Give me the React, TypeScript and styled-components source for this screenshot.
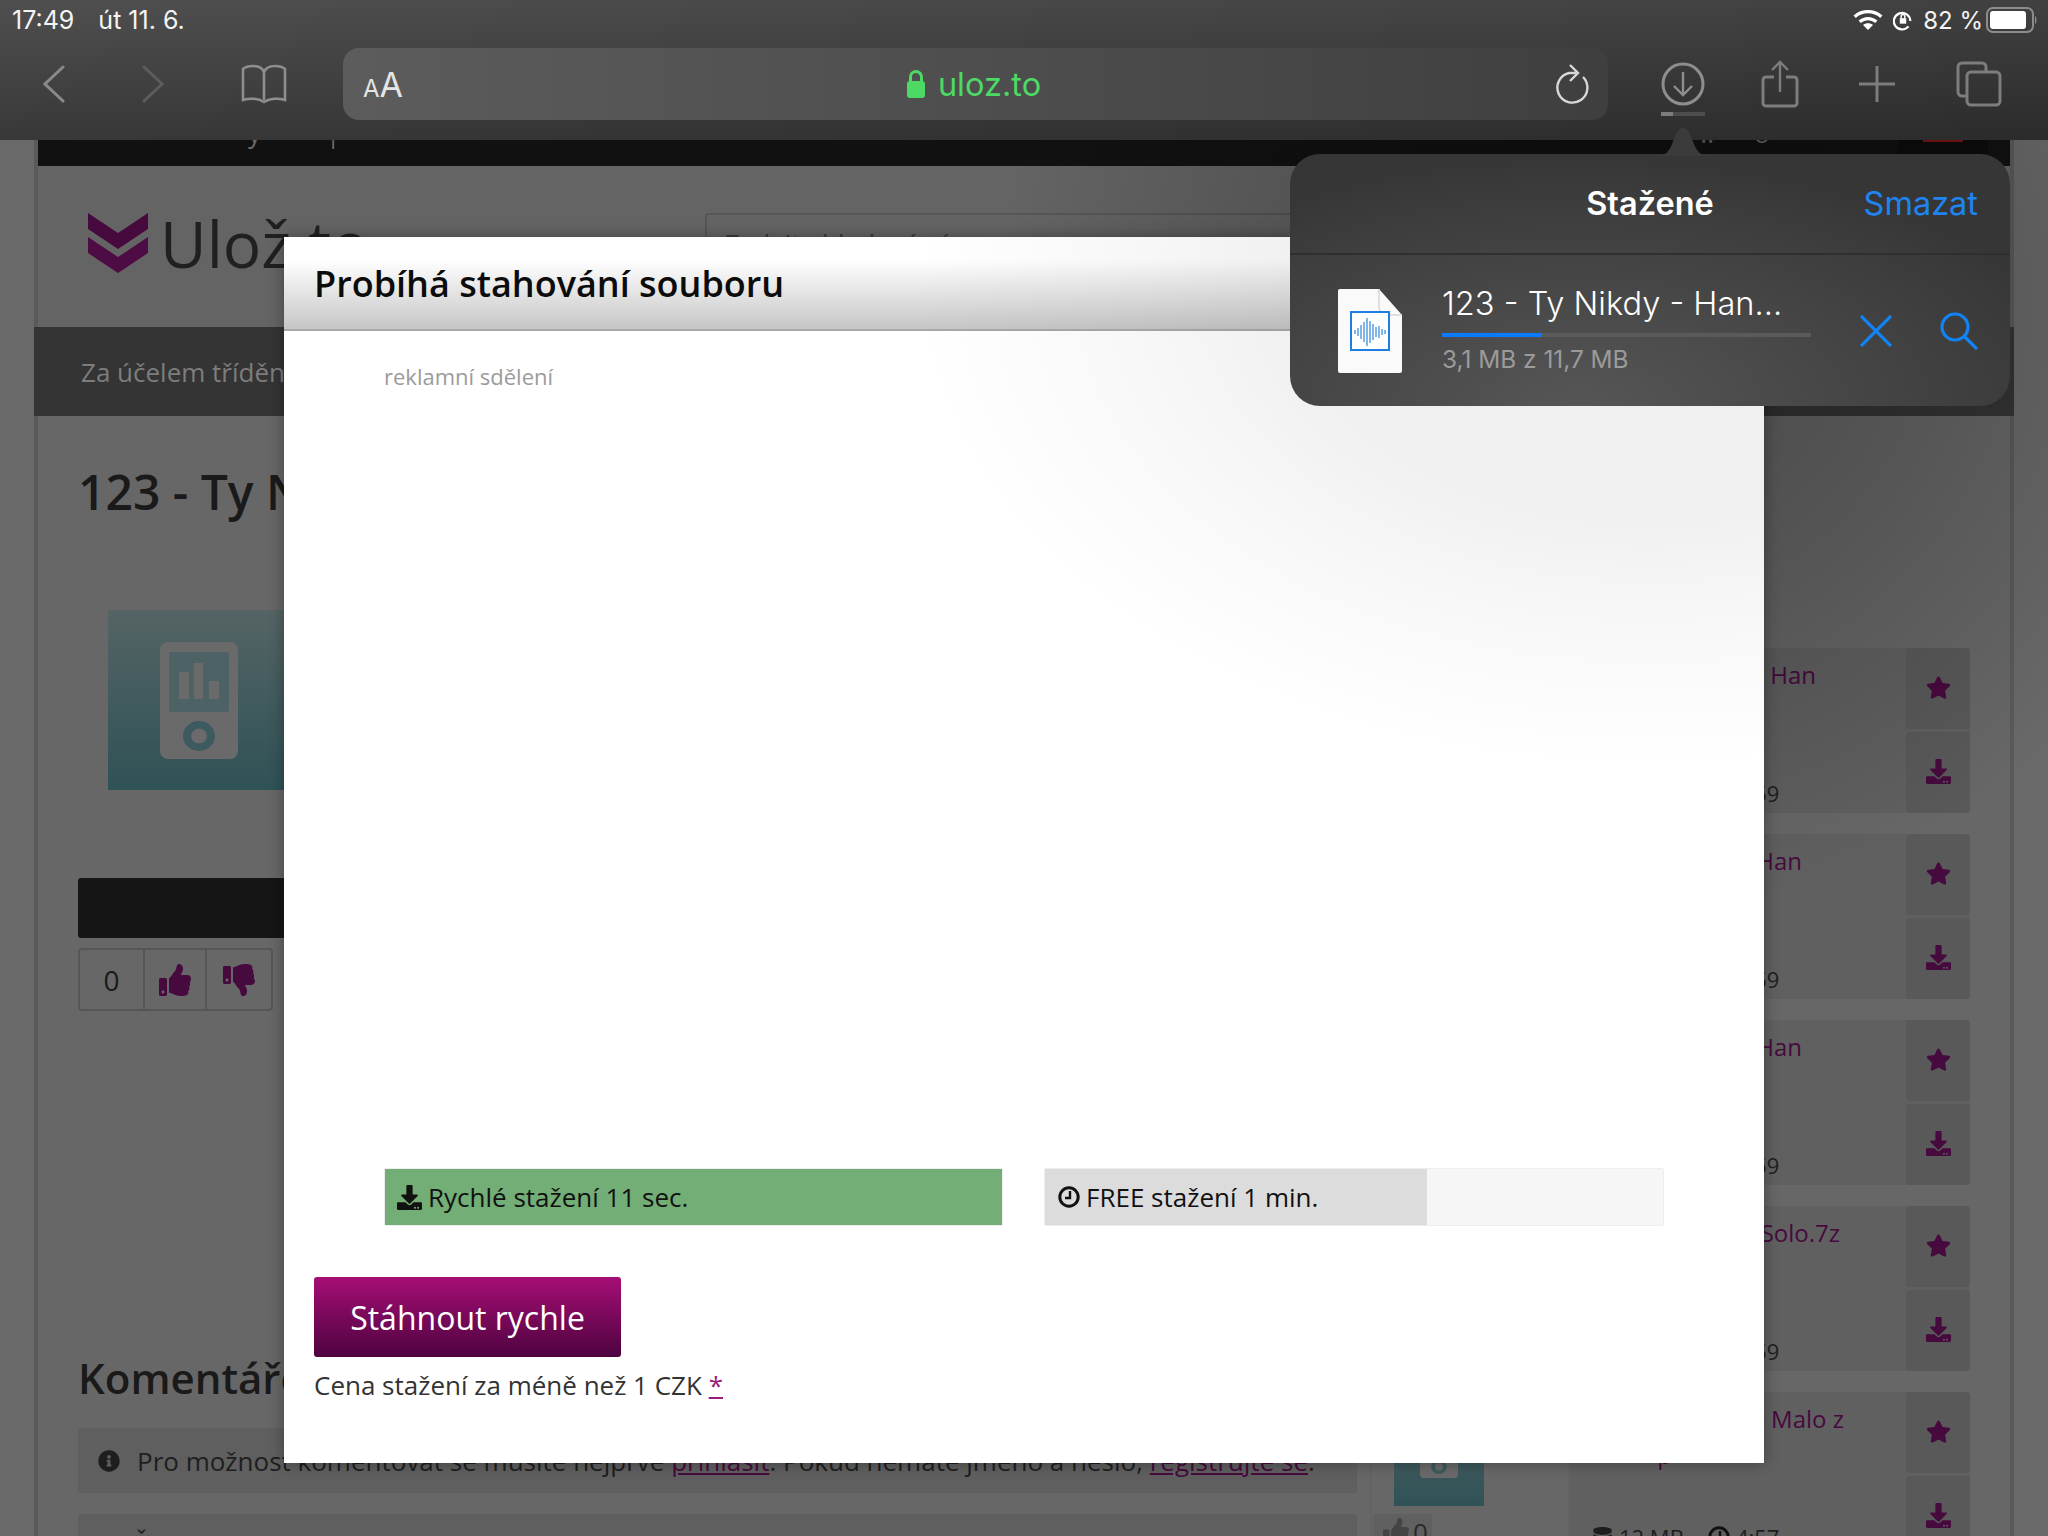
import React from 'react';
import styled, { createGlobalStyle } from 'styled-components';
import { FaDownload, FaStar, FaThumbsUp, FaThumbsDown, FaInfoCircle, FaDatabase } from 'react-icons/fa';

const GlobalStyle = createGlobalStyle`
  html, body { margin: 0; padding: 0; background: #666; }
  * { box-sizing: border-box; }
`;

const Screen = styled.div`
  position: relative;
  width: 2048px;
  height: 1536px;
  overflow: hidden;
  background: #696969;
  font-family: 'Open Sans', 'Liberation Sans', sans-serif;
  display: flex;
  flex-direction: column;
`;

/* ---------- safari chrome ---------- */
const Chrome = styled.header`
  position: relative;
  z-index: 4;
  flex: none;
  height: 140px;
  background: linear-gradient(to right, rgba(255, 255, 255, 0.04), rgba(0, 0, 0, 0.1)),
    linear-gradient(to bottom, #484848, #303030);
`;

const StatusBar = styled.div`
  height: 40px;
  display: flex;
  align-items: center;
  padding: 0 10px 0 12px;
  color: #f4f4f4;
  font: 400 25px Inter, 'Liberation Sans', sans-serif;
`;

const StatusDate = styled.span`
  margin-left: 24px;
  flex: 1;
`;

const StatusIcons = styled.div`
  display: flex;
  align-items: center;
  font-size: 24px;
`;

const BatteryLevel = styled.span`
  margin: 0 3px 0 10px;
`;

const RotationSlot = styled.span`
  display: flex;
  margin-left: 10px;
`;

const Toolbar = styled.div`
  display: flex;
  align-items: center;
  height: 88px;
`;

const NavGroup = styled.div`
  width: 343px;
  padding-left: 43px;
  display: flex;
  align-items: center;
  gap: 77px;
`;

const UrlBar = styled.div`
  position: relative;
  width: 1265px;
  height: 72px;
  border-radius: 16px;
  background: linear-gradient(to right, #5c5c5c, #4b4b4b 60%, #3f3f3f);
  display: flex;
  align-items: center;
  justify-content: space-between;
  padding: 0 18px 0 20px;
`;

const TextSize = styled.span`
  color: #e4e4e4;
  font: 400 34px Inter, 'Liberation Sans', sans-serif;
  small {
    font-size: 24px;
  }
`;

const Address = styled.div`
  margin-right: 12px;
  display: flex;
  align-items: center;
  gap: 12px;
  color: #4cd964;
  font: 400 32.5px Inter, 'Liberation Sans', sans-serif;
`;

const ActionGroup = styled.div`
  margin-left: 53px;
  display: flex;
  align-items: center;
`;

const ActionSlot = styled.div<{ $gap: number }>`
  display: flex;
  margin-left: ${(p) => p.$gap}px;
`;

const DownloadSlot = styled.div`
  position: relative;
  width: 44px;
  height: 44px;
`;

const MiniProgress = styled.div`
  position: absolute;
  left: 0;
  top: 50px;
  width: 44px;
  height: 4px;
  background: #4d4d4d;
  &::before {
    content: '';
    display: block;
    width: 12px;
    height: 4px;
    background: #7c7c7c;
  }
`;

const PopArrow = styled.svg`
  position: absolute;
  left: -7px;
  top: 66px;
  width: 58px;
  height: 28px;
  fill: #3b3b3b;
`;

/* ---------- dimmed page behind the dialog ---------- */
const Page = styled.div`
  position: relative;
  flex: 1;
  margin: 0 34px;
  border-left: 4px solid #5a5a5a;
  border-right: 4px solid #5a5a5a;
  background: #676767;
  &::after {
    content: '';
    position: absolute;
    inset: -140px -40px 0 -40px;
    background: radial-gradient(circle 620px at 1620px 300px, rgba(0, 0, 0, 0.32), rgba(0, 0, 0, 0.18) 50%, rgba(0, 0, 0, 0));
    pointer-events: none;
  }
`;

const BlackStrip = styled.div`
  height: 26px;
  background: #111;
  overflow: hidden;
  display: flex;
  color: #6a6a6a;
  font-size: 26px;
  line-height: 26px;
`;

const StripText = styled.span<{ $left: number }>`
  margin-top: -20px;
  margin-left: ${(p) => p.$left}px;
`;

const StripBadge = styled.span`
  margin-left: 128px;
  width: 90px;
  height: 16px;
  background: #0c0c0c;
  display: flex;
  justify-content: center;
  &::before {
    content: '';
    width: 40px;
    height: 2px;
    background: #7a1414;
  }
`;

const SiteHeader = styled.div`
  height: 161px;
  padding: 47px 0 0 50px;
  display: flex;
  background: #646464;
`;

const Logo = styled.div`
  width: 617px;
  display: flex;
  align-items: flex-start;
  gap: 12px;
  color: #202020;
  font-size: 64px;
  line-height: 62px;
`;

const SearchField = styled.div`
  width: 640px;
  height: 64px;
  border: 2px solid #565656;
  border-radius: 3px;
  padding: 10px 18px;
  color: #3a3a3a;
  font-size: 26px;
`;

const SiteNav = styled.div`
  height: 89px;
  margin: 0 -4px;
  padding-left: 47px;
  display: flex;
  align-items: center;
  background: #343434;
  color: #7d7d7d;
  font-size: 26px;
`;

const Columns = styled.div`
  display: flex;
  align-items: flex-start;
`;

const MainColumn = styled.div`
  width: 1279px;
  margin-left: 40px;
`;

const PageTitle = styled.h1`
  margin: 48px 0 0;
  height: 56px;
  color: #1a1a1a;
  font-size: 48px;
  line-height: 56px;
  font-weight: 600;
  white-space: nowrap;
`;

const Thumb = styled.div`
  width: 200px;
  height: 180px;
  margin: 90px 0 0 30px;
  display: flex;
  align-items: center;
  padding-left: 52px;
  background: linear-gradient(to bottom, #556464, #2f5257);
`;

const BlackBar = styled.div`
  height: 60px;
  margin-top: 88px;
  border-radius: 3px;
  background: #151515;
`;

const Rating = styled.div`
  margin-top: 10px;
  width: 195px;
  height: 63px;
  display: grid;
  grid-template-columns: 63px 62px 66px;
  border: 2px solid #565656;
  border-radius: 4px;
`;

const RatingCell = styled.div`
  display: flex;
  align-items: center;
  justify-content: center;
  color: #1a1a1a;
  font-size: 28px;
  & + & {
    border-left: 2px solid #565656;
  }
  svg {
    color: #470a3e;
    font-size: 32px;
  }
`;

const CommentsTitle = styled.h2`
  margin: 339px 0 0;
  height: 56px;
  color: #1a1a1a;
  font-size: 42px;
  line-height: 56px;
  font-weight: 600;
`;

const InfoBox = styled.div`
  margin-top: 22px;
  height: 65px;
  padding-left: 20px;
  display: flex;
  align-items: center;
  gap: 17px;
  border-radius: 3px;
  background: #5f5f5f;
  color: #1e1e1e;
  font-size: 26px;
  white-space: nowrap;
  svg {
    font-size: 22px;
  }
  a {
    color: #470a3e;
    text-decoration: underline;
  }
`;

const SortBox = styled.div`
  margin-top: 21px;
  height: 80px;
  padding: 12px 0 0 56px;
  border-radius: 3px;
  background: #5f5f5f;
  color: #1e1e1e;
  font-size: 26px;
`;

const SideColumn = styled.div`
  margin-left: 13px;
  width: 600px;
  padding-top: 232px;
  border-left: 2px solid #636363;
  display: flex;
  flex-direction: column;
  gap: 21px;
`;

const SideRow = styled.div`
  display: flex;
  height: 165px;
`;

const SideMedia = styled.div`
  width: 198px;
  flex: none;
  padding-left: 22px;
  border-right: 2px solid #636363;
`;

const SideThumb = styled.div`
  width: 90px;
  height: 114px;
  display: flex;
  align-items: center;
  justify-content: center;
  background: linear-gradient(to bottom, #556464, #2f5257);
`;

const SideLikes = styled.div`
  margin: 8px 0 0 -21px;
  width: 59px;
  height: 40px;
  padding: 4px 0 0 10px;
  display: flex;
  gap: 4px;
  border-radius: 3px;
  background: #606060;
  color: #2a2a2a;
  font-size: 26px;
  line-height: 28px;
  svg {
    color: #444;
  }
`;

const SideCard = styled.div`
  width: 400px;
  display: flex;
  border-radius: 3px;
  background: #606060;
`;

const SideText = styled.div`
  position: relative;
  flex: 1;
  padding-top: 9px;
`;

const SideTitle = styled.div<{ $inset: number }>`
  padding-right: ${(p) => p.$inset}px;
  height: 36px;
  text-align: right;
  white-space: nowrap;
  color: #470a3e;
  font-size: 24px;
  line-height: 36px;
`;

const SideMeta = styled.div`
  margin-top: 46px;
  padding-left: 22px;
  display: flex;
  align-items: center;
  gap: 6px;
  color: #1e1e1e;
  font-size: 22px;
  line-height: 36px;
  svg {
    font-size: 21px;
  }
`;

const MetaSpacer = styled.span`
  width: 12px;
`;

const SideButtons = styled.div`
  width: 64px;
  display: flex;
  flex-direction: column;
  gap: 3px;
`;

const SideButton = styled.div`
  flex: 1;
  display: flex;
  align-items: center;
  justify-content: center;
  padding-bottom: 2px;
  border-radius: 4px;
  background: #595959;
  color: #470a3e;
  font-size: 25px;
`;

/* ---------- dialog ---------- */
const Dialog = styled.section`
  position: absolute;
  z-index: 2;
  left: 284px;
  top: 237px;
  width: 1480px;
  height: 1226px;
  background: #fff;
  box-shadow: 0 0 14px rgba(0, 0, 0, 0.35);
  &::after {
    content: '';
    position: absolute;
    inset: 0;
    pointer-events: none;
    background: radial-gradient(
      ellipse 740px 490px at 1366px 43px,
      rgba(0, 0, 0, 0.058) 48%,
      rgba(0, 0, 0, 0.026) 72%,
      rgba(0, 0, 0, 0) 100%
    );
  }
`;

const DialogHeader = styled.div`
  height: 94px;
  padding-left: 30px;
  display: flex;
  align-items: center;
  border-bottom: 2px solid #a8a8a8;
  background: linear-gradient(to bottom, #fff 25%, #c6c6c6);
  color: #0c0c0c;
  font-size: 36px;
  font-weight: 600;
`;

const DialogBody = styled.div`
  padding: 0 30px;
`;

const AdLabel = styled.div`
  height: 32px;
  margin: 29px 0 0 70px;
  color: #9b9b9b;
  font-size: 22px;
  line-height: 32px;
`;

const Bars = styled.div`
  margin: 776px 70px 0;
  display: grid;
  grid-template-columns: 619px 620px;
  gap: 41px;
`;

const Bar = styled.div`
  height: 58px;
  border: 1px solid #eeeeee;
  background: #f6f6f6;
  border-radius: 2px;
`;

const BarFill = styled.div<{ $fast?: boolean }>`
  height: 100%;
  padding-left: ${(p) => (p.$fast ? 12 : 13)}px;
  display: flex;
  align-items: center;
  gap: 6px;
  background: ${(p) => (p.$fast ? '#73ae76' : '#dcdcdc')};
  color: #111;
  font-size: 26px;
  white-space: nowrap;
  svg {
    font-size: 25px;
  }
`;

const FastButton = styled.div`
  margin-top: 51px;
  width: 307px;
  height: 80px;
  display: flex;
  align-items: center;
  justify-content: center;
  border-radius: 3px;
  background: linear-gradient(to bottom, #a50e75, #4e0340);
  color: #fff;
  font-size: 32px;
`;

const PriceNote = styled.p`
  margin: 10px 0 0;
  color: #333;
  font-size: 26px;
  line-height: 36px;
  a {
    color: #9b1b78;
    text-decoration: underline;
  }
`;

/* ---------- downloads popover ---------- */
const Popover = styled.aside`
  position: absolute;
  z-index: 3;
  left: 1290px;
  top: 154px;
  width: 720px;
  height: 252px;
  border-radius: 30px;
  background: radial-gradient(ellipse 520px 250px at 40% 100%, #565656, #3a3a3a 90%, #363636);
  color: #fff;
  font-family: Inter, 'Liberation Sans', sans-serif;
`;

const PopHeader = styled.div`
  height: 101px;
  display: grid;
  grid-template-columns: 1fr auto 1fr;
  align-items: center;
  border-bottom: 2px solid #2f2f2f;
`;

const PopTitle = styled.div`
  grid-column: 2;
  font-size: 32.5px;
  font-weight: 600;
`;

const ClearLink = styled.div`
  justify-self: end;
  padding-right: 32px;
  color: #1f84f0;
  font-size: 32.5px;
`;

const DownloadRow = styled.div`
  height: 151px;
  padding-left: 48px;
  display: flex;
  align-items: center;
`;

const FileInfo = styled.div`
  width: 369px;
  margin-left: 40px;
  margin-top: -2px;
`;

const FileName = styled.div`
  height: 42px;
  font-size: 32.6px;
  line-height: 42px;
  font-weight: 300;
  white-space: nowrap;
`;

const Progress = styled.div`
  height: 4px;
  margin-top: 9px;
  background: #5a5a5a;
`;

const ProgressFill = styled.div`
  height: 100%;
  background: #0a7aff;
`;

const FileSize = styled.div`
  margin-top: 4px;
  color: #9b9b9b;
  font-size: 24.4px;
  line-height: 36px;
`;

const RowActions = styled.div`
  margin-left: 49px;
  display: flex;
  align-items: center;
  gap: 48px;
`;

/* ---------- drawings ---------- */
const Wifi = () => (
  <svg width="30" height="22" viewBox="0 0 36 26" fill="none" stroke="#fff" strokeWidth="4">
    <path d="M2 9c9-8 23-8 32 0" />
    <path d="M8 15c6-5 14-5 20 0" />
    <path d="M18 25l-6-6c3-3 9-3 12 0z" fill="#fff" stroke="none" />
  </svg>
);

const RotationLock = () => (
  <svg width="20" height="22" viewBox="0 0 20 24" fill="none" stroke="#fff" strokeWidth="2.4">
    <path d="M16 19a9 9 0 1 1 2-6" />
    <rect x="6.5" y="10" width="7" height="6" fill="#fff" stroke="none" />
    <path d="M8 10V8a2 2 0 0 1 4 0v2" strokeWidth="1.6" />
  </svg>
);

const Battery = () => (
  <svg width="52" height="26" viewBox="0 0 52 26">
    <rect x="1" y="1" width="46" height="24" rx="6" fill="none" stroke="#8c8c8c" strokeWidth="2" />
    <rect x="4" y="4" width="36" height="18" rx="3" fill="#fff" />
    <path d="M49 9c2 1 2 7 0 8z" fill="#8c8c8c" />
  </svg>
);

const Chevron = ({ flip, color }: { flip?: boolean; color: string }) => (
  <svg width="22" height="38" viewBox="0 0 22 38" fill="none" stroke={color} strokeWidth="3">
    <path d={flip ? 'M2 2l18 17L2 36' : 'M20 2L2 19l18 17'} strokeLinecap="round" />
  </svg>
);

const BookIcon = () => (
  <svg width="46" height="40" viewBox="0 0 46 40" fill="none" stroke="#8e8e8e" strokeWidth="2.6">
    <path d="M23 8c-2-5-6-6-11-6-4 0-8 1-10 3v31c6-2 15-2 21 2 6-4 15-4 21-2V5c-2-2-6-3-10-3-5 0-9 1-11 6zv28" />
  </svg>
);

const LockIcon = () => (
  <svg width="20" height="30" viewBox="0 0 20 30">
    <path d="M4.5 13V8a5.5 5.5 0 0 1 11 0v5" fill="none" stroke="#4cd964" strokeWidth="3" />
    <rect x="1" y="12" width="18" height="17" rx="3" fill="#4cd964" />
  </svg>
);

const ReloadIcon = () => (
  <svg width="34" height="40" viewBox="0 0 34 40" fill="none" stroke="#d8d8d8" strokeWidth="2.4">
    <path d="M27 13a15 15 0 1 1-14-4l7 0" />
    <path d="M14 1l8 8-8 8" />
  </svg>
);

const DownloadCircle = () => (
  <svg width="44" height="44" viewBox="0 0 44 44" fill="none" stroke="#8e8e8e" strokeWidth="3">
    <circle cx="22" cy="22" r="20" />
    <path d="M22 10v23M13 24l9 9 9-9" strokeWidth="2.4" />
  </svg>
);

const ShareIcon = () => (
  <svg width="38" height="48" viewBox="0 0 38 48" fill="none" stroke="#7d7d7d" strokeWidth="3">
    <path d="M13 17H5a3 3 0 0 0-3 3v23a3 3 0 0 0 3 3h28a3 3 0 0 0 3-3V20a3 3 0 0 0-3-3h-8" />
    <path d="M19 32V2M11 10l8-8 8 8" strokeWidth="2.4" />
  </svg>
);

const PlusIcon = () => (
  <svg width="36" height="36" viewBox="0 0 36 36" stroke="#7d7d7d" strokeWidth="3">
    <path d="M18 0v36M0 18h36" />
  </svg>
);

const TabsIcon = () => (
  <svg width="46" height="46" viewBox="0 0 46 46" fill="none" stroke="#7d7d7d" strokeWidth="3">
    <path d="M11 35H6a4 4 0 0 1-4-4V6a4 4 0 0 1 4-4h20a4 4 0 0 1 4 4v5" />
    <rect x="11" y="11" width="33" height="33" rx="4" />
  </svg>
);

const LogoMark = () => (
  <svg width="60" height="60" viewBox="0 0 60 60">
    <path d="M0 0l30 20L60 0v16L30 36 0 16z" fill="#470a3e" />
    <path d="M0 24l30 20 30-20v16L30 60 0 40z" fill="#4e0c44" />
  </svg>
);

const PlayerIcon = ({ width }: { width: number }) => (
  <svg width={width} viewBox="0 0 78 117">
    <rect width="78" height="117" rx="8" fill="#6a6a6a" />
    <rect x="9" y="10" width="60" height="60" rx="2" fill="#4c6265" />
    <path d="M19 30h10v27H19zM34 21h9v36h-9zM49 39h10v18H49z" fill="#6a6a6a" />
    <ellipse cx="39" cy="94" rx="16" ry="15" fill="#3c5a5f" />
    <ellipse cx="39" cy="94" rx="8" ry="7.5" fill="#6a6a6a" />
  </svg>
);

const ClockGlyph = () => (
  <svg width="22" height="22" viewBox="0 0 22 22" fill="none" stroke="#111" strokeWidth="3">
    <circle cx="11" cy="11" r="9.2" />
    <path d="M12 5v7H7" strokeWidth="2.4" />
  </svg>
);

const FileIcon = () => (
  <svg width="64" height="84" viewBox="0 0 64 84">
    <path d="M2 0h39l23 26v56a2 2 0 0 1-2 2H2a2 2 0 0 1-2-2V2a2 2 0 0 1 2-2z" fill="#fafafa" />
    <path d="M41 0v18a8 8 0 0 0 8 8h15" fill="none" stroke="#d8d8d8" strokeWidth="1.5" />
    <rect x="13" y="23" width="38" height="38" fill="#fff" stroke="#1f7fe0" strokeWidth="2" />
    <path
      d="M17 41v4M20 39v8M23 36v14M26 33v20M29 29v28M32 32v22M35 35v16M38 38v10M41 37v12M44 40v6M47 41v4"
      stroke="#2f86da"
      strokeWidth="1.2"
    />
  </svg>
);

const CloseIcon = () => (
  <svg width="32" height="32" viewBox="0 0 32 32" stroke="#1283f5" strokeWidth="3.2">
    <path d="M1 1l30 30M31 1L1 31" />
  </svg>
);

const SearchIcon = () => (
  <svg width="38" height="38" viewBox="0 0 38 38" fill="none" stroke="#1283f5" strokeWidth="3.2">
    <circle cx="15" cy="15" r="13" />
    <path d="M24 24l13 13" />
  </svg>
);

interface ISideItem {
  title: string;
  inset: number;
  second?: string;
  time: string;
}

const sideItems: Array<ISideItem> = [
  { title: 'Ty Nikdy - Han', inset: 90, time: '4:59' },
  { title: 'Ty Nikdy - Han', inset: 104, time: '4:59' },
  { title: 'Ty Nikdy - Han', inset: 104, time: '4:59' },
  { title: 'Ty Nikdy - Solo.7z', inset: 66, time: '4:59' },
  { title: 'Ty Nikdy - Malo z', inset: 62, second: 'p', time: '4:57' },
];

const SideItem: React.FunctionComponent<{ item: ISideItem; last: boolean }> = ({ item, last }) => (
  <SideRow>
    <SideMedia>
      {last && (
        <>
          <SideThumb>
            <PlayerIcon width={38} />
          </SideThumb>
          <SideLikes>
            <FaThumbsUp />0
          </SideLikes>
        </>
      )}
    </SideMedia>
    <SideCard>
      <SideText>
        <SideTitle $inset={item.inset}>{item.title}</SideTitle>
        <SideTitle $inset={234}>{item.second || ' '}</SideTitle>
        <SideMeta>
          <FaDatabase />
          12 MB
          <MetaSpacer />
          <ClockGlyph />
          {item.time}
        </SideMeta>
      </SideText>
      <SideButtons>
        <SideButton>
          <FaStar />
        </SideButton>
        <SideButton>
          <FaDownload />
        </SideButton>
      </SideButtons>
    </SideCard>
  </SideRow>
);

const App: React.FunctionComponent = () => {
  return (
    <Screen>
      <GlobalStyle />
      <Chrome>
        <StatusBar>
          <span>17:49</span>
          <StatusDate>út 11. 6.</StatusDate>
          <StatusIcons>
            <Wifi />
            <RotationSlot>
              <RotationLock />
            </RotationSlot>
            <BatteryLevel>82 %</BatteryLevel>
            <Battery />
          </StatusIcons>
        </StatusBar>
        <Toolbar>
          <NavGroup>
            <Chevron color="#8a8a8a" />
            <Chevron flip color="#5c5c5c" />
            <BookIcon />
          </NavGroup>
          <UrlBar>
            <TextSize>
              <small>A</small>A
            </TextSize>
            <Address>
              <LockIcon />
              uloz.to
            </Address>
            <ReloadIcon />
          </UrlBar>
          <ActionGroup>
            <DownloadSlot>
              <DownloadCircle />
              <MiniProgress />
              <PopArrow viewBox="0 0 58 28">
                <path d="M0 28c10 0 14-2 18-12 4-10 6-16 11-16s7 6 11 16c4 10 8 12 18 12z" />
              </PopArrow>
            </DownloadSlot>
            <ActionSlot $gap={56}>
              <ShareIcon />
            </ActionSlot>
            <ActionSlot $gap={60}>
              <PlusIcon />
            </ActionSlot>
            <ActionSlot $gap={61}>
              <TabsIcon />
            </ActionSlot>
          </ActionGroup>
        </Toolbar>
      </Chrome>

      <Page>
        <BlackStrip>
          <StripText $left={210}>y</StripText>
          <StripText $left={65}>|</StripText>
          <StripText $left={1360}>..</StripText>
          <StripText $left={40}>o</StripText>
          <StripBadge />
        </BlackStrip>
        <SiteHeader>
          <Logo>
            <LogoMark />
            <span>Ulož.to</span>
          </Logo>
          <SearchField>Zadejte hledaný výraz</SearchField>
        </SiteHeader>
        <SiteNav>Za účelem třídění a přehlednosti</SiteNav>
        <Columns>
          <MainColumn>
            <PageTitle>123 - Ty Nikdy - Hana</PageTitle>
            <Thumb>
              <PlayerIcon width={78} />
            </Thumb>
            <BlackBar />
            <Rating>
              <RatingCell>0</RatingCell>
              <RatingCell>
                <FaThumbsUp />
              </RatingCell>
              <RatingCell>
                <FaThumbsDown />
              </RatingCell>
            </Rating>
            <CommentsTitle>Komentáře</CommentsTitle>
            <InfoBox>
              <FaInfoCircle />
              <span>
                Pro možnost komentovat se musíte nejprve <a>přihlásit</a>. Pokud nemáte jméno a heslo,{' '}
                <a>registrujte se</a>.
              </span>
            </InfoBox>
            <SortBox>Š</SortBox>
          </MainColumn>
          <SideColumn>
            {sideItems.map((item, index) => (
              <SideItem key={index} item={item} last={index === sideItems.length - 1} />
            ))}
          </SideColumn>
        </Columns>
      </Page>

      <Dialog>
        <DialogHeader>Probíhá stahování souboru</DialogHeader>
        <DialogBody>
          <AdLabel>reklamní sdělení</AdLabel>
          <Bars>
            <Bar>
              <BarFill $fast>
                <FaDownload />
                Rychlé stažení 11 sec.
              </BarFill>
            </Bar>
            <Bar>
              <BarFill style={{ width: `${(382 / 618) * 100}%` }}>
                <ClockGlyph />
                FREE stažení 1 min.
              </BarFill>
            </Bar>
          </Bars>
          <FastButton>Stáhnout rychle</FastButton>
          <PriceNote>
            Cena stažení za méně než 1 CZK <a>*</a>
          </PriceNote>
        </DialogBody>
      </Dialog>

      <Popover>
        <PopHeader>
          <PopTitle>Stažené</PopTitle>
          <ClearLink>Smazat</ClearLink>
        </PopHeader>
        <DownloadRow>
          <FileIcon />
          <FileInfo>
            <FileName>123 - Ty Nikdy - Han...</FileName>
            <Progress>
              <ProgressFill style={{ width: '27%' }} />
            </Progress>
            <FileSize>3,1 MB z 11,7 MB</FileSize>
          </FileInfo>
          <RowActions>
            <CloseIcon />
            <SearchIcon />
          </RowActions>
        </DownloadRow>
      </Popover>
    </Screen>
  );
};

export default App;
